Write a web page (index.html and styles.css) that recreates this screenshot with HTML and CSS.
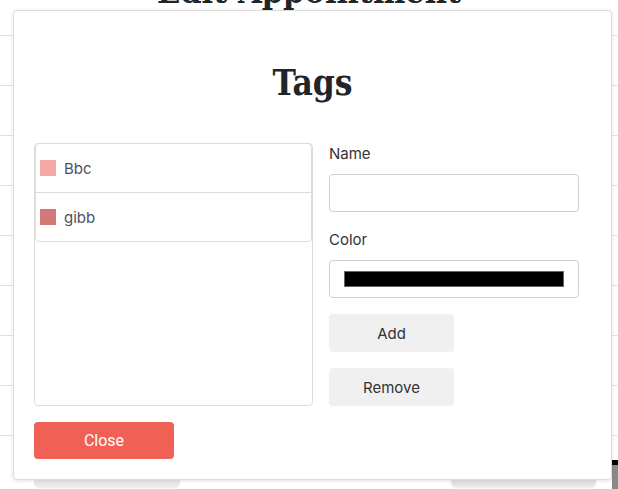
FILE: index.html
```html
<!DOCTYPE html>
<html lang="en">
<head>
<meta charset="utf-8">
<title>Tags</title>
<link rel="stylesheet" href="styles.css">
</head>
<body>
<div class="page">
  <h1 class="page-title">Edit Appointment</h1>
  <div class="rows">
    <div class="row"></div><div class="row"></div><div class="row"></div><div class="row"></div>
    <div class="row"></div><div class="row"></div><div class="row"></div><div class="row"></div>
    <div class="row"></div>
  </div>
  <div class="page-actions">
    <div class="page-btn"></div>
    <div class="page-btn page-btn-alt"></div>
  </div>
  <div class="scroll-thumb"></div>
</div>

<div class="modal">
  <h2 class="modal-title">Tags</h2>
  <div class="modal-body">
    <div class="tag-box">
      <ul class="tag-list">
        <li class="tag-item"><span class="swatch" style="background:#f4a9a7"></span><span>Bbc</span></li>
        <li class="tag-item"><span class="swatch" style="background:#d37a79"></span><span>gibb</span></li>
      </ul>
    </div>
    <div class="tag-form">
      <label class="field-label">Name</label>
      <div class="text-input"></div>
      <label class="field-label field-label-gap">Color</label>
      <div class="color-input"><span class="color-swatch"></span></div>
      <button class="btn-light">Add</button>
      <button class="btn-light">Remove</button>
    </div>
  </div>
  <button class="btn-close">Close</button>
</div>
</body>
</html>
```

FILE: styles.css
```css
* { box-sizing: border-box; }
html, body { margin: 0; padding: 0; }
body {
  width: 618px;
  height: 489px;
  overflow: hidden;
  background: #ffffff;
  font-family: "Inter", "Noto Sans", sans-serif;
  position: relative;
}

/* background page */
.page {
  position: relative;
  display: flow-root;
  width: 618px;
  height: 489px;
}
.page-title {
  margin: -28px 0 0 0;
  height: 38px;
  line-height: 38px;
  text-align: center;
  font-family: "DejaVu Serif", serif;
  font-stretch: condensed;
  font-weight: 700;
  font-size: 34px;
  color: #212529;
}
.rows {
  margin-top: 25px;
  display: flex;
  flex-direction: column;
}
.row {
  height: 50px;
  border-top: 1px solid #e2e2e2;
}
.page-actions {
  position: absolute;
  left: 34px;
  top: 479px;
  width: 562px;
  display: flex;
  justify-content: space-between;
}
.page-btn {
  width: 146px;
  height: 8px;
  border-radius: 0 0 5px 5px;
  background: #e9e9e9;
  box-shadow: 0 1px 2px rgba(0,0,0,0.08);
}
.page-btn-alt {
  width: 145px;
  background: #e3e3e3;
  border: 2px solid #e8e8e8;
  border-top: none;
}
.scroll-thumb {
  position: absolute;
  left: 612px;
  top: 460px;
  width: 6px;
  height: 29px;
  background: #8a8a8a;
  border-top: 5px solid #000;
}

/* modal */
.modal {
  position: absolute;
  left: 13px;
  top: 10px;
  width: 599px;
  height: 470px;
  background: #fff;
  border: 1px solid #dcdcdc;
  border-radius: 4px;
  box-shadow: 0 1px 4px rgba(0,0,0,0.12);
  padding: 20px;
  display: flex;
  flex-direction: column;
}
.modal-title {
  margin: 29px 0 0 0;
  height: 46px;
  line-height: 46px;
  text-align: center;
  font-family: "DejaVu Serif", serif;
  font-stretch: condensed;
  font-weight: 700;
  font-size: 35px;
  color: #212529;
}
.modal-body {
  margin-top: 37px;
  display: grid;
  grid-template-columns: 279px 250px;
  column-gap: 16px;
  height: 263px;
}
.tag-box {
  border: 1px solid #dddddd;
  border-radius: 4px;
}
.tag-list {
  list-style: none;
  margin: -1px 0 0 0;
  padding: 0;
  border: 1px solid #dcdcdc;
  border-radius: 4px;
}
.tag-item {
  height: 48px;
  display: flex;
  align-items: center;
  gap: 8px;
  padding-left: 4px;
  font-size: 15px;
  color: #4a5261;
}
.tag-item + .tag-item {
  height: 49px;
  border-top: 1px solid #dcdcdc;
}
.swatch {
  width: 16px;
  height: 16px;
  display: block;
}

.tag-form {
  display: flex;
  flex-direction: column;
  align-items: flex-start;
}
.field-label {
  display: block;
  height: 22px;
  line-height: 22px;
  font-size: 15px;
  color: #333333;
}
.field-label-gap { margin-top: 17px; }
.text-input, .color-input {
  margin-top: 9px;
  width: 250px;
  height: 38px;
  border: 1px solid #ccd0d6;
  border-radius: 4px;
  background: #fff;
}
.color-input {
  padding: 10px 14px;
}
.color-swatch {
  display: block;
  width: 100%;
  height: 16px;
  background: #000;
  border: 1px solid #666;
}
.btn-light {
  margin-top: 16px;
  width: 125px;
  height: 38px;
  border: none;
  border-radius: 4px;
  background: #f0f0f0;
  font-family: "Inter", sans-serif;
  font-size: 15px;
  color: #333333;
  padding: 0;
}
.btn-close {
  margin-top: 16px;
  width: 140px;
  height: 38px;
  border: none;
  border-radius: 4px;
  background: #f06055;
  color: #ffffff;
  font-family: "Roboto", sans-serif;
  font-size: 16px;
  padding: 0;
}
```
